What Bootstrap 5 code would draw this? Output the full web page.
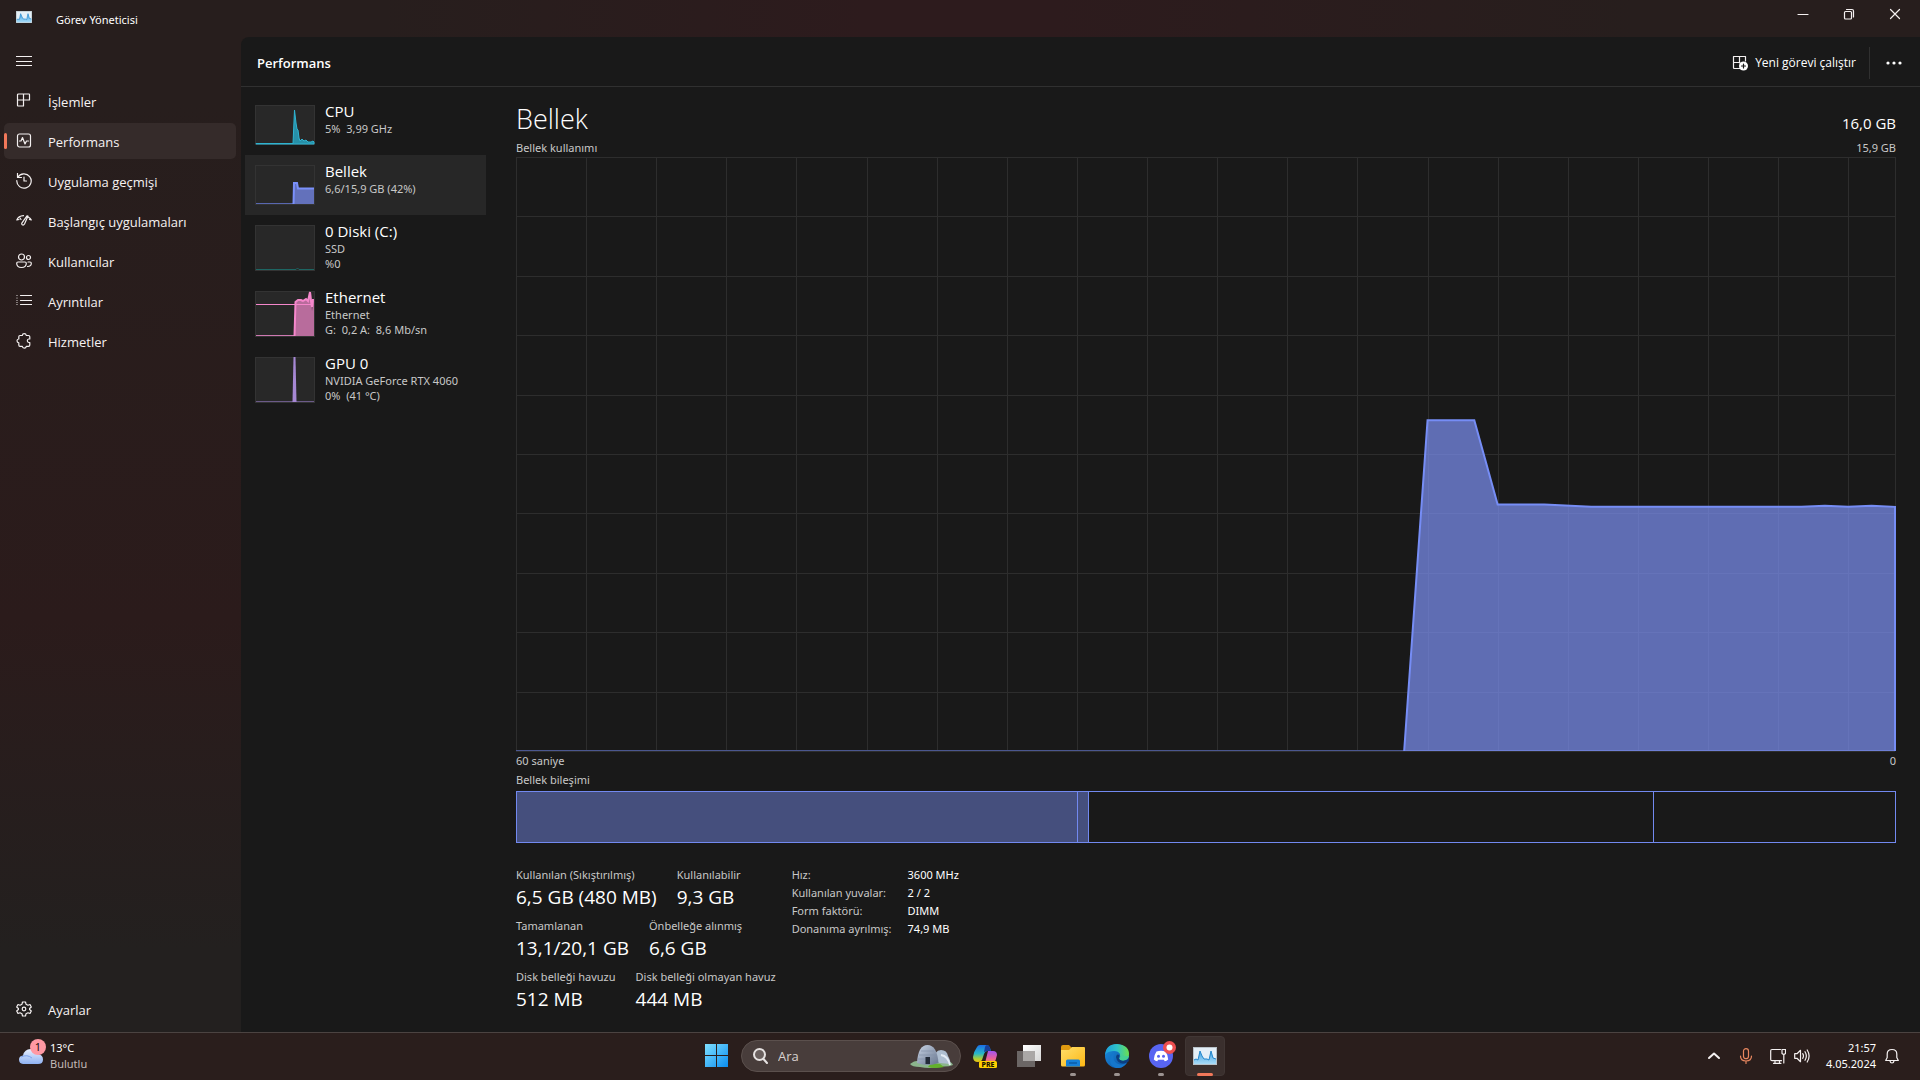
<!DOCTYPE html>
<html lang="tr" data-bs-theme="dark">
<head>
<meta charset="utf-8">
<meta name="viewport" content="width=device-width, initial-scale=1">
<title>Görev Yöneticisi</title>
<link href="https://cdn.jsdelivr.net/npm/bootstrap@5.3.0/dist/css/bootstrap.min.css" rel="stylesheet">
<style>
  :root { --panel:#191919; --line:#2d2d2d; --mem:#7289f0; --soft:#c8c8c8; }
  body { font-family:"Open Sans","Noto Sans",sans-serif; font-size:13px; line-height:20px; color:#fff; background:#271d1c; }
  button { font:inherit; color:inherit; background:none; border:0; padding:0; }
  a { color:inherit; text-decoration:none; }
  svg { display:block; flex-shrink:0; }
  .ico { width:16px; height:16px; fill:none; stroke:#f4f0f0; stroke-width:1.2; stroke-linecap:round; stroke-linejoin:round; }
  .app-window { background:linear-gradient(180deg,#271e1d 10%,#2b1b1b 60%,#23201f 92%); min-height:0; }
  .title-bar { height:37px; background:linear-gradient(90deg,#271e1d 20%,#2d1b1d 45%,#2d1b1d 55%,#271e1d 85%); }
  .window-btns { padding-right:2px; }
  .caption-btn { width:46px; height:28px; }
  .small-text { font-family:"Noto Sans","Open Sans",sans-serif; font-size:11px; line-height:16px; }
  .side-nav { width:241px; padding:6px 5px 5px 4px; }
  .side-item { height:36px; padding:0 12px; gap:16px; border-radius:5px; color:#f6f2f2; width:100%; text-align:left; }
  .side-item span { padding-top:2px; }
  .side-item.active { background:#352b2a; position:relative; }
  .side-item.active::before { content:""; position:absolute; left:0; top:10px; width:3px; height:16px; border-radius:2px; background:#f2785a; }
  .content-panel { background:var(--panel); border-top-left-radius:8px; min-width:0; }
  .content-body { min-height:0; }
  .panel-head { height:50px; border-bottom:1px solid #303030; padding:2px 18px 0 16px; }
  .page-title { font-size:13px; line-height:20px; font-weight:600; margin:0; }
  .run-btn { gap:7px; font-size:12px; }
  .run-btn span { font-family:"Open Sans",sans-serif; }
  .head-sep { width:1px; height:32px; background:#303030; margin:0 16px 0 13px; }
  .perf-list { width:245px; padding:8px 0 0 4px; }
  .perf-item { width:241px; padding:6px 10px 0; gap:10px; height:66px; text-align:left; }
  .perf-item.short { height:60px; }
  .perf-item.active { background:#272727; }
  .perf-name { font-size:15px; line-height:20px; }
  .perf-sub { font-family:"Noto Sans","Open Sans",sans-serif; font-size:11px; line-height:15px; color:var(--soft); }
  .thumb { margin-top:4px; }
  .main-area { padding:16px 24px 19px 30px; min-width:0; }
  .big-title { font-size:27px; line-height:32px; font-weight:300; margin:0; }
  .total-mem { font-size:15px; line-height:20px; padding-bottom:2px; }
  .caption-line { font-family:"Noto Sans","Open Sans",sans-serif; font-size:11px; line-height:16px; color:var(--soft); }
  .above-chart { margin:5px 0 1px; }
  .below-chart { margin:1px 0 3px; }
  .chart { flex:1 1 0; height:0; min-height:120px; }
  .comp-bar { height:52px; border:1px solid var(--mem); margin-top:3px; }
  .comp-bar > div { border-right:1px solid var(--mem); }
  .comp-bar > div:last-child { border-right:0; }
  .in-use { background:#454f7d; width:40.7%; }
  .modified { background:#454f7d; width:11px; }
  .standby { width:41%; }
  .stats { margin-top:24px; gap:16px; }
  .stat-rows { display:flex; flex-direction:column; gap:7px; }
  .stat-pair { display:flex; gap:20px; }
  .stat-value { font-size:19px; line-height:28px; }
  .spec-table { font-family:"Noto Sans","Open Sans",sans-serif; font-size:11px; line-height:18px; margin-top:-1px; }
  .spec-table th { font-weight:400; color:var(--soft); padding:0 16px 0 0; }
  .spec-table td { padding:0; }
  .task-bar { height:48px; padding-bottom:1px; background:#2a1e1c; border-top:1px solid #4b4341; display:grid; grid-template-columns:1fr auto 1fr; align-items:center; font-family:"Noto Sans","Open Sans",sans-serif; font-size:11px; line-height:16px; }
  .task-apps { padding-left:2px; }
  .task-btn { width:44px; height:46px; display:flex; align-items:center; justify-content:center; position:relative; }
  .task-btn.running::after { content:""; position:absolute; bottom:3px; left:19px; width:6px; height:3px; border-radius:2px; background:#9b9391; }
  .task-btn.current::before { content:""; position:absolute; left:2px; top:3px; width:40px; height:40px; border-radius:4px; background:#3a2f2d; border:1px solid #403634; }
  .task-btn.current::after { left:14px; width:16px; background:#f2785a; }
  .task-btn svg { position:relative; }
  .search-box { width:220px; height:32px; margin:0 2px; padding:0 7px 0 11px; gap:10px; border-radius:16px; background:#483d3b; border:1px solid #5b504d; }
  .search-box input { font-family:"Open Sans",sans-serif; min-width:0; flex:1; border:0; background:none; outline:0; color:#fff; font-size:13px; line-height:20px; padding:0; }
  .search-box input::placeholder { color:#d8d2d0; opacity:1; }
  .weather-text { color:#c3bab8; }
  .tray { padding-right:20px; }
  .mic-ico { stroke:#e8875f; }
  .chevron-ico { stroke-width:2; }
</style>
<script src="https://cdn.jsdelivr.net/npm/bootstrap@5.3.0/dist/js/bootstrap.bundle.min.js" defer></script>
</head>
<body class="vh-100 d-flex flex-column overflow-hidden">

<svg width="0" height="0" class="position-absolute" aria-hidden="true">
  <defs>
    <linearGradient id="gWin" x1="0" y1="0" x2="1" y2="1"><stop offset="0" stop-color="#7fe0ff"/><stop offset="1" stop-color="#0a8df0"/></linearGradient>
    <linearGradient id="gCloud" x1="0" y1="0" x2="0" y2="1"><stop offset="0" stop-color="#e8f0ff"/><stop offset="1" stop-color="#8fb2f2"/></linearGradient>
    <linearGradient id="gTm" x1="0" y1="0" x2="0" y2="1"><stop offset="0" stop-color="#3fa0e0"/><stop offset="1" stop-color="#a8dcf8"/></linearGradient>
    <linearGradient id="gFold" x1="0" y1="0" x2="1" y2="1"><stop offset="0" stop-color="#ffdf6b"/><stop offset="1" stop-color="#fdb714"/></linearGradient>
    <linearGradient id="gE1" x1="0" y1="0" x2="1" y2="0"><stop offset="0" stop-color="#1c9fe0"/><stop offset=".5" stop-color="#2fc2c8"/><stop offset="1" stop-color="#6be04e"/></linearGradient>
    <linearGradient id="gE2" x1="0" y1="0" x2="1" y2="1"><stop offset="0" stop-color="#1a8fe0"/><stop offset="1" stop-color="#0c4fa0"/></linearGradient>
    <linearGradient id="gC1" x1="0" y1="0" x2="0" y2="1"><stop offset="0" stop-color="#1c6fe8"/><stop offset=".5" stop-color="#27b6c8"/><stop offset=".8" stop-color="#a6cf3a"/><stop offset="1" stop-color="#f4c20d"/></linearGradient>
    <linearGradient id="gC2" x1="0" y1="0" x2="0" y2="1"><stop offset="0" stop-color="#a255f0"/><stop offset=".6" stop-color="#e8609c"/><stop offset="1" stop-color="#f7964a"/></linearGradient>
    <linearGradient id="gIgl" x1="0" y1="0" x2="1" y2="1"><stop offset="0" stop-color="#c9d5e6"/><stop offset="1" stop-color="#65738c"/></linearGradient>
    <linearGradient id="gTv" x1="0" y1="0" x2="1" y2="1"><stop offset="0" stop-color="#fff"/><stop offset="1" stop-color="#d6d6d6"/></linearGradient>
    <symbol id="tm" viewBox="0 0 24 18"><rect width="24" height="18" fill="#b9c3ca"/><rect x="1" y="1" width="22" height="16" fill="#e4eff7"/><path d="M1 13 3 12 5 13 7 4 9 9 11 12 14 12 16 13 18 4 20 11 23 12V17H1Z" fill="url(#gTm)"/><path d="M1 13 3 12 5 13 7 4 9 9 11 12 14 12 16 13 18 4 20 11 23 12" fill="none" stroke="#2286cc"/></symbol>
  </defs>
</svg>

<div class="app-window flex-grow-1 d-flex flex-column">
  <header class="title-bar d-flex">
    <div class="d-flex flex-grow-1 small-text">
      <svg class="ms-3 mt-2" width="16" height="18"><use href="#tm" y="3" width="16" height="12"/></svg>
      <span class="ms-4 pt-2 mt-1">Görev Yöneticisi</span>
    </div>
    <div class="window-btns d-flex">
      <button class="caption-btn d-flex align-items-center justify-content-center" aria-label="Simge durumuna küçült"><svg class="ico" viewBox="0 0 16 16"><path d="M3 8.500H13"/></svg></button>
      <button class="caption-btn d-flex align-items-center justify-content-center" aria-label="Önceki boyut"><svg class="ico" viewBox="0 0 16 16"><rect x="3.500" y="5.500" width="7" height="7.500" rx="1"/><path d="M5.500 3.500H11Q12.500 3.500 12.500 5V11"/></svg></button>
      <button class="caption-btn d-flex align-items-center justify-content-center" aria-label="Kapat"><svg class="ico" viewBox="0 0 16 16"><path d="M3.500 3.500 12.500 12.500M12.500 3.500 3.500 12.500"/></svg></button>
    </div>
  </header>

  <div class="content-body d-flex flex-grow-1">
    <nav class="side-nav d-flex flex-column gap-1 flex-shrink-0">
      <button class="side-item d-flex align-items-center" aria-label="Gezintiyi aç"><svg class="ico" viewBox="0 0 16 16"><path d="M.5 3.500H15.500M.5 8.500H15.500M.5 12.500H15.500"/></svg></button>
      <a href="#" class="side-item d-flex align-items-center"><svg class="ico" viewBox="0 0 16 16"><path d="M2.500 1H13Q13.500 1 13.500 1.500V7H1.500M7.500 1V13H2Q1.500 13 1.500 12.500V2Q1.500 1 2.500 1"/></svg><span>İşlemler</span></a>
      <a href="#" class="side-item active d-flex align-items-center"><svg class="ico" viewBox="0 0 16 16"><rect x="1.500" y="1" width="13" height="13" rx="2"/><path d="M3.500 8H5L6.500 4.500 9 11 10.500 8H12.500"/></svg><span>Performans</span></a>
      <a href="#" class="side-item d-flex align-items-center"><svg class="ico" viewBox="0 0 16 16"><path d="M1.500 .5V4.500H5.500M1.800 4.300A7.200 7.200 0 1 1 .8 7.500M8 4V8H10.500"/></svg><span>Uygulama geçmişi</span></a>
      <a href="#" class="side-item d-flex align-items-center"><svg class="ico" viewBox="0 0 16 16"><path d="M.8 7Q2.500 3 7.500 2.700M.8 7 3 6.500M12.500 4.200Q14.500 5.300 15.300 7L13.500 6.500M12 3 8.500 11Q7.500 12.500 6.300 11.800 5.300 11 6 9.800L11 2.800ZM4 5 5 6.500"/></svg><span>Başlangıç uygulamaları</span></a>
      <a href="#" class="side-item d-flex align-items-center"><svg class="ico" viewBox="0 0 16 16"><circle cx="5.500" cy="4" r="3"/><circle cx="12.500" cy="4.500" r="2"/><path d="M2 9H9Q10.300 9 10.300 10.300 10.300 14.500 5.500 14.500 .7 14.500 .7 10.300 .7 9 2 9M12 9H14Q15.300 9 15.300 10.300 15.300 13.500 11.500 13.500"/></svg><span>Kullanıcılar</span></a>
      <a href="#" class="side-item d-flex align-items-center"><svg class="ico" viewBox="0 0 16 16"><path d="M4.500 2.500H15.500M4.500 7.500H15.500M4.500 11.500H15.500M1 2.500V2.500M1 5V5M1 7.500V7.500M1 9.500V9.500M1 11.500V11.500"/></svg><span>Ayrıntılar</span></a>
      <a href="#" class="side-item d-flex align-items-center"><svg class="ico" viewBox="0 0 16 16"><path d="M4 2.500H6.300Q6.500 .7 8.300 .7 10 .7 10.300 2.500H12.500Q13.800 2.500 13.800 3.800V6H12.800Q11.300 6.200 11.300 7.800 11.300 9.300 12.800 9.500H13.800V12Q13.800 13.300 12.500 13.300H10.300Q10 15.200 8.300 15.200 6.500 15.200 6.300 13.300H4Q2.800 13.300 2.800 12V9.800Q1 9.500 1 7.800 1 6.200 2.800 6V3.800Q2.800 2.500 4 2.500Z"/></svg><span>Hizmetler</span></a>
      <a href="#" class="side-item d-flex align-items-center mt-auto"><svg class="ico" viewBox="0 0 16 16"><path d="M6.500 1H9.500L10 3.200 12 4.200 14 3.500 15.300 6 13.600 7.500V8.500L15.300 10 14 12.500 12 11.800 10 12.800 9.500 15H6.500L6 12.800 4 11.800 2 12.500 .7 10 2.400 8.500V7.500L.7 6 2 3.500 4 4.200 6 3.200Z"/><circle cx="8" cy="8" r="1.800"/></svg><span>Ayarlar</span></a>
    </nav>

    <div class="content-panel flex-grow-1 d-flex flex-column">
      <div class="panel-head d-flex align-items-center flex-shrink-0">
        <h1 class="page-title me-auto">Performans</h1>
        <button class="run-btn d-flex align-items-center"><svg class="ico" viewBox="0 0 16 16"><path d="M8 13.500H2.500Q1.500 13.500 1.500 12.500V1.500H13.500V6M1.500 7.500H8M7.500 1.500V8"/><circle cx="11.500" cy="11" r="4.500" fill="#fff" stroke="none"/><path d="M11.500 9V13M9.500 11H13.500" stroke="#191919"/></svg><span>Yeni görevi çalıştır</span></button>
        <div class="head-sep"></div>
        <button aria-label="Diğer seçenekler"><svg width="16" height="16" fill="#fff"><circle cx="2" cy="8" r="1.600"/><circle cx="8" cy="8" r="1.600"/><circle cx="14" cy="8" r="1.600"/></svg></button>
      </div>

      <div class="content-body d-flex flex-grow-1">
        <div class="perf-list flex-shrink-0">
          <button class="perf-item short d-flex align-items-start">
            <svg class="thumb" width="60" height="40"><rect x=".5" y=".5" width="59" height="39" fill="#282828" stroke="#333"/><path d="M1 38.500H38L39.500 5 41 18 42 24 43 25 44 33 45 36 47 34 49 36 51 35 53 37 56 37 58 36 59 37V39H1Z" fill="#2790a8" stroke="#2fb4d2"/></svg>
            <span><span class="perf-name d-block">CPU</span><span class="perf-sub d-block">5%&nbsp; 3,99 GHz</span></span>
          </button>
          <button class="perf-item short active d-flex align-items-start">
            <svg class="thumb" width="60" height="40"><rect x=".5" y=".5" width="59" height="39" fill="#282828" stroke="#333"/><path d="M1 38.500H38" stroke="#5867b0"/><path d="M38.500 39 39 18H42L43 23.500H59V39Z" fill="#6371bb"/><path d="M38.500 39 39 18H42L43 23.500H59" fill="none" stroke="#7a90fa" stroke-width="2"/></svg>
            <span><span class="perf-name d-block">Bellek</span><span class="perf-sub d-block">6,6/15,9 GB (42%)</span></span>
          </button>
          <button class="perf-item d-flex align-items-start">
            <svg class="thumb" width="60" height="46"><rect x=".5" y=".5" width="59" height="45" fill="#282828" stroke="#333"/><path d="M1 44.500H41L42.500 43 44 44.500H59" fill="none" stroke="#1d6663"/></svg>
            <span><span class="perf-name d-block">0 Diski (C:)</span><span class="perf-sub d-block">SSD</span><span class="perf-sub d-block">%0</span></span>
          </button>
          <button class="perf-item d-flex align-items-start">
            <svg class="thumb" width="60" height="46"><rect x=".5" y=".5" width="59" height="45" fill="#282828" stroke="#333"/><path d="M1 44.500H39" stroke="#ce79b2"/><path d="M39 45 40.500 11 43 9 46 9 48 11 51 8 53 10 55 1 56 1 57 20 58 8 59 10V45Z" fill="#b86c9c"/><path d="M39.500 45 40.500 11 43 9 46 9 48 10 51 8 53 10 55 1 56 10 57 16 58 8" fill="none" stroke="#f587cb" stroke-width="2"/><path d="M1 13.500H58" stroke="#f587cb"/></svg>
            <span><span class="perf-name d-block">Ethernet</span><span class="perf-sub d-block">Ethernet</span><span class="perf-sub d-block">G:&nbsp; 0,2 A:&nbsp; 8,6 Mb/sn</span></span>
          </button>
          <button class="perf-item d-flex align-items-start">
            <svg class="thumb" width="60" height="46"><rect x=".5" y=".5" width="59" height="45" fill="#282828" stroke="#333"/><path d="M1 44.500H59" stroke="#6b5a88"/><path d="M37.500 45 38.500 0H40.500L41.500 45Z" fill="#a688d4"/></svg>
            <span><span class="perf-name d-block">GPU 0</span><span class="perf-sub d-block text-nowrap">NVIDIA GeForce RTX 4060</span><span class="perf-sub d-block">0%&nbsp; (41 °C)</span></span>
          </button>
        </div>

        <main class="main-area flex-grow-1 d-flex flex-column">
          <div class="d-flex justify-content-between align-items-end">
            <h2 class="big-title">Bellek</h2>
            <span class="total-mem">16,0 GB</span>
          </div>
          <div class="caption-line above-chart d-flex justify-content-between"><span>Bellek kullanımı</span><span>15,9 GB</span></div>
          <svg class="chart w-100" id="memChart" role="img" aria-label="Bellek kullanımı grafiği"></svg>
          <div class="caption-line below-chart d-flex justify-content-between"><span>60 saniye</span><span>0</span></div>
          <div class="caption-line">Bellek bileşimi</div>
          <div class="comp-bar d-flex flex-shrink-0"><div class="in-use"></div><div class="modified"></div><div class="standby"></div><div></div></div>
          <div class="stats d-flex">
            <div class="stat-rows">
              <div class="stat-pair">
                <div><div class="caption-line">Kullanılan (Sıkıştırılmış)</div><div class="stat-value">6,5 GB (480 MB)</div></div>
                <div><div class="caption-line">Kullanılabilir</div><div class="stat-value">9,3 GB</div></div>
              </div>
              <div class="stat-pair">
                <div><div class="caption-line">Tamamlanan</div><div class="stat-value">13,1/20,1 GB</div></div>
                <div><div class="caption-line">Önbelleğe alınmış</div><div class="stat-value">6,6 GB</div></div>
              </div>
              <div class="stat-pair">
                <div><div class="caption-line">Disk belleği havuzu</div><div class="stat-value">512 MB</div></div>
                <div><div class="caption-line">Disk belleği olmayan havuz</div><div class="stat-value">444 MB</div></div>
              </div>
            </div>
            <table class="spec-table align-self-start">
              <tbody>
                <tr><th scope="row">Hız:</th><td>3600 MHz</td></tr>
                <tr><th scope="row">Kullanılan yuvalar:</th><td>2 / 2</td></tr>
                <tr><th scope="row">Form faktörü:</th><td>DIMM</td></tr>
                <tr><th scope="row">Donanıma ayrılmış:</th><td>74,9 MB</td></tr>
              </tbody>
            </table>
          </div>
        </main>
      </div>
    </div>
  </div>
</div>

<footer class="task-bar flex-shrink-0">
  <button class="d-flex align-items-center ps-3 text-start">
    <svg width="34" height="34" viewBox="0 0 34 34"><path d="M7 25Q3 24.500 3 20.500 3 17 7 16.500 8.500 10 14.500 10 20 10 21.500 15 27 15.500 27 20.500 27 25 22 25Z" fill="url(#gCloud)"/><path d="M5 18Q11 15 16 19" stroke="#7ea4ee" fill="none"/><circle cx="22" cy="8" r="8" fill="#ff99a4"/><text x="22" y="12" font-size="11" text-anchor="middle" fill="#1c1010">1</text></svg>
    <span><span class="d-block">13°C</span><span class="weather-text d-block">Bulutlu</span></span>
  </button>
  <div class="task-apps d-flex align-items-center">
    <button class="task-btn" aria-label="Başlat"><svg width="24" height="24" fill="url(#gWin)"><path d="M0 0H11V11H0ZM12 0H23V11H12ZM0 12H11V23H0ZM12 12H23V23H12Z"/></svg></button>
    <div class="search-box d-flex align-items-center">
      <svg width="15" height="16" fill="none" stroke="#e6e2e1" stroke-width="2"><circle cx="6.500" cy="6.500" r="5.500" fill="#6a605e"/><path d="M10.500 11 14 15" stroke-linecap="round"/></svg>
      <input type="text" aria-label="Ara" placeholder="Ara">
      <svg width="43" height="26" viewBox="0 0 43 26"><path d="M0 21Q5 17 10 18L36 17Q42 19 43 22 38 24 32 23.500 20 26 10 24 2 24 0 21Z" fill="#8bb58c"/><path d="M18 24Q20 20 30 21L34 24Q25 26 18 24Z" fill="#63b02c"/><path d="M24 18Q24 7 31 7 37 7 38 13 41 18 40 21L30 20Z" fill="#aebed0"/><path d="M31 12Q38 13 40 22" fill="none" stroke="#e4ecf5" stroke-width="2"/><path d="M7 20Q8 2 17.500 2 27 2 28.500 20 18 24 7 20Z" fill="url(#gIgl)"/><path d="M11 8H24M9 12H26M8 16H28" stroke="#8190a8" stroke-width=".7"/><path d="M15.500 21V14H20V21Z" fill="#222b38"/></svg>
    </div>
    <button class="task-btn" aria-label="Copilot"><svg width="25" height="25" viewBox="0 0 25 25"><path d="M7 1H14Q16 1 17 4L18 7H14Q12 7 11 10L9 16Q8 18 5 18 0 18 0 13 1 7 4 3 5 1 7 1Z" fill="url(#gC1)"/><path d="M14 1Q16 1 17 4L18 7H14L11 8 12 3Q12.500 1 14 1Z" fill="#163f9c"/><path d="M15 7H20Q24 7 24 11 23 16 21 19H11Q13 17 13.500 13Z" fill="url(#gC2)"/><rect x="6" y="17" width="18" height="7" rx="1.500" fill="#ffd000"/><text x="15" y="23" font-size="7" font-weight="800" text-anchor="middle" fill="#1b1500">PRE</text></svg></button>
    <button class="task-btn" aria-label="Görev görünümü"><svg width="24" height="24"><rect x="6" y="1" width="18" height="16" fill="url(#gTv)"/><rect y="7" width="18" height="16" fill="#6b6665"/><rect x="6" y="7" width="12" height="10" fill="#aaa7a6"/></svg></button>
    <button class="task-btn running" aria-label="Dosya Gezgini"><svg width="24" height="24"><path d="M0 3Q0 1 2 1H8L11 4V9H0Z" fill="#e09a10"/><path d="M0 6H8L11 3H23Q24 3 24 4V21Q24 22.500 22.500 22.500H1.500Q0 22.500 0 21Z" fill="url(#gFold)"/><path d="M5 22.500V17Q5 15.500 6.500 15.500H17.500Q19 15.500 19 17V22.500Z" fill="#1580d8"/><path d="M8 19H16" stroke="#0b5ca8" stroke-width="1.500"/></svg></button>
    <button class="task-btn running" aria-label="Microsoft Edge"><svg width="24" height="24"><circle cx="12" cy="12" r="12" fill="url(#gE2)"/><path d="M0 11Q1 0 12 0 24 1 24 10 24 16 18 16.500 14 16.500 14.500 14 16 13 15 10 13 6.500 8 7 2 7.500 0 11Z" fill="url(#gE1)"/><path d="M8.500 12Q8 19 15 20.500 19 21 22 18.500 18 25 11 23.900 5 22 5 16 5 10 10 8 8.500 10 8.500 12Z" fill="#1577cc"/><path d="M11 13Q12 19 18 19.500 21 19.500 23.500 17.500L24 15Q18 18 14.500 15.500 13 14 14.500 11.500 12 9 11 13Z" fill="#0c3e80"/><path d="M14.500 14Q16 13 15 10L20 12 24 12Q23 16 18 16.500 14.500 16.500 14.500 14Z" fill="#45cf93"/></svg></button>
    <button class="task-btn running" aria-label="Discord"><svg width="30" height="30" viewBox="-3 1 30 30"><circle cx="12" cy="16" r="12" fill="#5865f2"/><path d="M7.500 11.500Q12 10 16.500 11.500 19 15 19.200 19.500 17.500 21 15.800 21.200L14.800 19.700H9.200L8.200 21.200Q6.500 21 4.800 19.500 5 15 7.500 11.500Z" fill="#fff"/><circle cx="9.500" cy="16.300" r="1.500" fill="#5865f2"/><circle cx="14.500" cy="16.300" r="1.500" fill="#5865f2"/><circle cx="20.500" cy="7.500" r="6.500" fill="#ed4f50"/><circle cx="20.500" cy="7.500" r="3" fill="#fff"/></svg></button>
    <button class="task-btn running current" aria-label="Görev Yöneticisi"><svg width="24" height="18"><use href="#tm" width="24" height="18"/></svg></button>
  </div>
  <div class="tray d-flex align-items-center justify-content-end">
    <button class="me-3" aria-label="Gizli simgeleri göster"><svg class="ico chevron-ico" viewBox="0 0 16 16"><path d="M3 10 8 5.500 13 10"/></svg></button>
    <button class="me-3" aria-label="Mikrofon"><svg class="ico mic-ico" viewBox="0 0 16 16"><rect x="5.500" y=".7" width="5" height="10" rx="2.500"/><path d="M2.500 8Q2.500 13 8 13 13.500 13 13.500 8M8 13V15.500"/></svg></button>
    <button class="d-flex gap-2" aria-label="Ağ ve ses">
      <svg class="ico" viewBox="0 0 16 16"><path d="M10.500 1.500H2Q.7 1.500 .7 2.700V11.500Q.7 12.700 2 12.700H11.500M5 12.700V15.300M9.500 12.700V15.300M3.500 15.300H11M12 1.500H15.500V5.500Q13.800 7 12 5.500ZM13.800 6.500V15"/></svg>
      <svg class="ico" viewBox="0 0 16 16"><path d="M.7 5.700H3L6.500 2.300V13.700L3 10.300H.7ZM8.700 5.700Q10.200 8 8.700 10.300M11 3.700Q13.700 8 11 12.300M13.200 2Q17 8 13.200 14"/></svg>
    </button>
    <button class="text-end ms-3">
      <span class="d-block">21:57</span><span class="d-block">4.05.2024</span>
    </button>
    <button class="ms-2" aria-label="Bildirimler"><svg class="ico" viewBox="0 0 16 16"><path d="M1.700 12.500H14.300L12.800 9.500V6Q12.800 1.500 8 1.500 3.200 1.500 3.200 6V9.500ZM6 12.800Q6.300 15 8 15 9.700 15 10 12.800"/></svg></button>
  </div>
</footer>

<script>
  // Memory use over 60 seconds: [sample index 0-59, percent in use]
  const samples = [[38,0],[39,55.700],[41,55.700],[42,41.500],[44,41.500],[46,41.100],[55,41.100],[56,41.300],[57,41.100],[58,41.300],[59,41.100]];
  const chart = document.getElementById('memChart');
  function draw() {
    const w = chart.clientWidth - 1, h = chart.clientHeight - 1;
    const x = i => i * w / 59, y = p => h * (1 - p / 100);
    let grid = '';
    for (let i = 0; i < 59; i += 3) grid += `M${Math.round(x(i)) + .5} 0V${h}`;
    grid += `M${w + .5} 0V${h}`;
    for (let r = 0; r <= 10; r++) grid += `M0 ${Math.round(h * r / 10) + .5}H${w}`;
    const line = samples.map(s => x(s[0]) + ' ' + y(s[1])).join('L');
    chart.innerHTML = `<path d="${grid}" stroke="#2d2d2d" fill="none"/>
      <path d="M0 ${h - .5}H${w}" stroke="#4b578f"/>
      <path d="M${line}V${h}Z" fill="#7a8ded" fill-opacity=".73"/>
      <path d="M${line}V${h}" stroke="#768df5" stroke-width="2" fill="none"/>`;
  }
  draw();
  addEventListener('resize', draw);
</script>
</body>
</html>
